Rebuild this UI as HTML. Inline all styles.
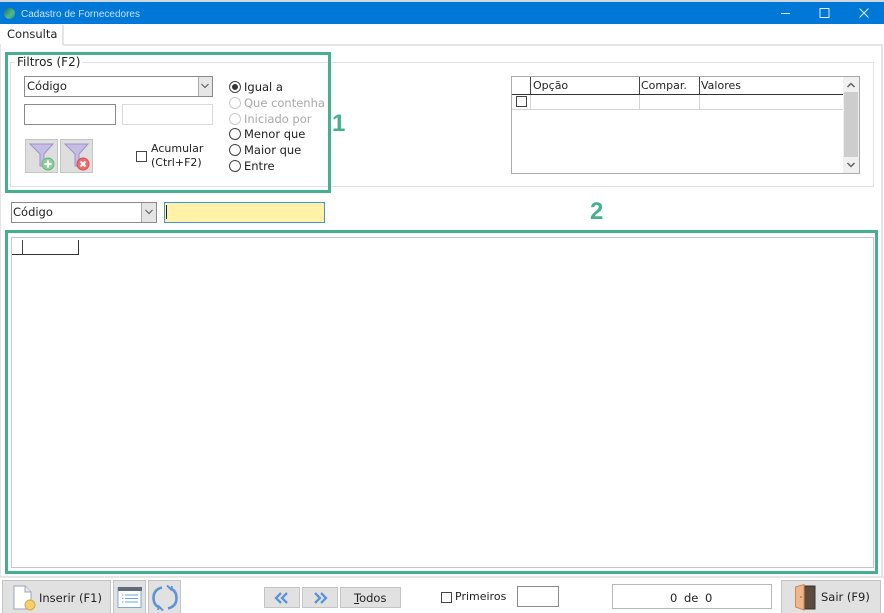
<!DOCTYPE html>
<html><head><meta charset="utf-8">
<style>
html,body{margin:0;padding:0;background:#fff}
#p{position:relative;width:884px;height:613px;overflow:hidden;background:#fff;font-family:"DejaVu Sans","Liberation Sans",sans-serif;font-size:11.5px;color:#222;filter:blur(.3px)}
#p div,#p span.a,#p svg{position:absolute;box-sizing:border-box}
.t{white-space:nowrap;line-height:14px}
.inp{background:#fff;border:1px solid #8a8a8a}
.btn{background:#e1e1e1;border:1px solid #c4c4c4}
.rad{width:12px;height:12px;border:1.3px solid #444;border-radius:50%;background:#fff}
.rd{border-color:#ccc}
.dis{color:#a8a8a8}
.chk{width:11px;height:11px;border:1px solid #444;background:#fff}
.g{border:3px solid #45b08c}
</style></head><body>
<div id="p">
<div style="left:0;top:0;width:884px;height:2px;background:#cfd6dc"></div>
<div style="left:0;top:2px;width:884px;height:22px;background:#0078d7"></div>
<div style="left:4px;top:8px;width:11px;height:11px;border-radius:50%;background:linear-gradient(135deg,#1c6d5a,#52b98f 60%,#2a8a70)"></div>
<div class="t" style="left:21px;top:8px;font-family:'Liberation Sans',sans-serif;font-size:10px;color:#c9e2f6">Cadastro de Fornecedores</div>
<svg style="left:775px;top:2px" width="109" height="22" fill="none" stroke="#dcecf9" stroke-width="1"><path d="M6 11.5H15"/><rect x="45" y="6.5" width="9" height="9"/><path d="M84.5 6.5L93.5 15.5M93.5 6.5L84.5 15.5"/></svg>

<div style="left:63px;top:44px;width:819px;height:2px;background:#e4e4e4"></div>
<div style="left:62px;top:25px;width:2px;height:20px;background:#e4e4e4"></div>
<div style="left:881px;top:44px;width:2px;height:532px;background:#e4e4e4"></div>
<div style="left:0px;top:44px;width:1px;height:532px;background:#e4e4e4"></div>
<div class="t" style="left:7px;top:27px;font-size:11.5px">Consulta</div>

<div style="left:10px;top:62px;width:864px;height:125px;border:1px solid #e2e2e2"></div>
<div class="t" style="left:15px;top:55px;background:#fff;padding:0 2px;font-size:12px">Filtros (F2)</div>

<div class="inp" style="left:24px;top:76px;width:189px;height:21px"></div>
<div style="left:198px;top:77px;width:14px;height:19px;background:#e6e6e6;border-left:1px solid #aaa"></div>
<svg style="left:200px;top:82px" width="10" height="8" fill="none" stroke="#555"><path d="M1.5 2L5 5.5L8.5 2"/></svg>
<div class="t" style="left:27px;top:79px">Código</div>
<div class="inp" style="left:24px;top:104px;width:92px;height:21px"></div>
<div class="inp" style="left:122px;top:104px;width:91px;height:21px;border-color:#d9d9d9"></div>

<div class="btn" style="left:25px;top:139px;width:33px;height:34px;background:#dedede"></div>
<div class="btn" style="left:60px;top:139px;width:33px;height:34px;background:#dedede"></div>
<svg style="left:25px;top:139px" width="70" height="35">
<path d="M5 5H28L19 15V27H15V15Z" fill="#c5bde3" stroke="#9d93c8"/>
<circle cx="23" cy="25" r="6" fill="#8fd09a" stroke="#66b57c"/><path d="M19.500 25H26.500M23 21.500V28.500" stroke="#fff" stroke-width="2"/>
<path d="M40 5H63L54 15V27H50V15Z" fill="#c5bde3" stroke="#9d93c8"/>
<circle cx="58" cy="25" r="6" fill="#ef6a6a" stroke="#dd4f4f"/><path d="M55.500 22.500L60.500 27.500M60.500 22.500L55.500 27.500" stroke="#fff" stroke-width="2"/>
</svg>

<div class="chk" style="left:136px;top:151px"></div>
<div class="t" style="left:151px;top:142px;font-size:11px">Acumular</div>
<div class="t" style="left:151px;top:156px;font-size:11px">(Ctrl+F2)</div>

<div class="rad" style="left:229px;top:81px"></div><div style="left:232px;top:84px;width:6px;height:6px;border-radius:50%;background:#333"></div>
<div class="t" style="left:244px;top:80px">Igual a</div>
<div class="rad rd" style="left:229px;top:97px"></div><div class="t dis" style="left:244px;top:96px">Que contenha</div>
<div class="rad rd" style="left:229px;top:113px"></div><div class="t dis" style="left:244px;top:112px">Iniciado por</div>
<div class="rad" style="left:229px;top:128px"></div><div class="t" style="left:244px;top:127px">Menor que</div>
<div class="rad" style="left:229px;top:144px"></div><div class="t" style="left:244px;top:143px">Maior que</div>
<div class="rad" style="left:229px;top:160px"></div><div class="t" style="left:244px;top:159px">Entre</div>

<div class="g" style="left:5px;top:52px;width:326px;height:141px"></div>
<div class="t" style="left:332px;top:111px;font-family:'Liberation Sans',sans-serif;font-weight:bold;font-size:24px;line-height:26px;color:#45b08c">1</div>

<div style="left:511px;top:76px;width:349px;height:98px;border:1px solid #aaa"></div>
<div style="left:512px;top:94px;width:331px;height:1px;background:#333"></div>
<div style="left:512px;top:109px;width:331px;height:1px;background:#d4d4d4"></div>
<div style="left:530px;top:77px;width:1px;height:17px;background:#444"></div>
<div style="left:639px;top:77px;width:1px;height:17px;background:#444"></div>
<div style="left:699px;top:77px;width:1px;height:17px;background:#444"></div>
<div style="left:530px;top:95px;width:1px;height:14px;background:#d4d4d4"></div>
<div style="left:639px;top:95px;width:1px;height:14px;background:#d4d4d4"></div>
<div style="left:699px;top:95px;width:1px;height:14px;background:#d4d4d4"></div>
<div class="t" style="left:533px;top:79px;font-size:11px">Opção</div>
<div class="t" style="left:641px;top:79px;font-size:11px">Compar.</div>
<div class="t" style="left:701px;top:79px;font-size:11px">Valores</div>
<div class="chk" style="left:516px;top:96px"></div>
<div style="left:843px;top:77px;width:16px;height:96px;background:#f0f0f0"></div>
<div style="left:844px;top:92px;width:14px;height:65px;background:#cdcdcd"></div>
<svg style="left:844px;top:80px" width="14" height="90" fill="none" stroke="#555" stroke-width="1.3"><path d="M3.500 7L7 3.500L10.500 7M3.500 83L7 86.500L10.500 83"/></svg>

<div class="inp" style="left:11px;top:202px;width:146px;height:21px"></div>
<div style="left:141px;top:203px;width:15px;height:19px;background:#e4e4e4;border-left:1px solid #aaa"></div>
<svg style="left:144px;top:208px" width="10" height="8" fill="none" stroke="#555"><path d="M1.500 2L5 5.500L8.500 2"/></svg>
<div class="t" style="left:13px;top:205px">Código</div>
<div style="left:164px;top:202px;width:161px;height:21px;background:#fff2a8;border:1px solid #3f94dc"></div>
<div style="left:166px;top:205px;width:1px;height:14px;background:#222"></div>
<div class="t" style="left:590px;top:199px;font-family:'Liberation Sans',sans-serif;font-weight:bold;font-size:24px;line-height:26px;color:#45b08c">2</div>

<div class="g" style="left:5px;top:230px;width:873px;height:344px"></div>
<div style="left:11px;top:237px;width:863px;height:331px;border:1px solid #c6c6c6"></div>
<div style="left:12px;top:254px;width:67px;height:1px;background:#333"></div>
<div style="left:22px;top:240px;width:1px;height:14px;background:#444"></div>
<div style="left:78px;top:240px;width:1px;height:15px;background:#333"></div>

<div style="left:0;top:576px;width:884px;height:2px;background:#e6e6e6"></div>
<div class="btn" style="left:2px;top:580px;width:109px;height:34px"></div>
<svg style="left:12px;top:584px" width="26" height="28"><path d="M2 2H13L19 8V25H2Z" fill="#fff" stroke="#9aa4b2"/><path d="M13 2V8H19" fill="#e8ecf0" stroke="#9aa4b2"/><circle cx="18" cy="21" r="5" fill="#f5cf6c" stroke="#d6a843"/></svg>
<div class="t" style="left:39px;top:591px">Inserir (F1)</div>
<div class="btn" style="left:113px;top:580px;width:33px;height:34px"></div>
<svg style="left:117px;top:586px" width="26" height="23"><rect x="1" y="1.500" width="23" height="20" fill="#fff" stroke="#7aa7d6"/><rect x="1" y="1" width="24" height="4" fill="#5d6b7c"/><path d="M5 9h1.500M8 9h13M5 12.500h1.500M8 12.500h13M5 16h1.500M8 16h13" stroke="#6fa6dc"/></svg>
<div class="btn" style="left:148px;top:580px;width:33px;height:34px"></div>
<svg style="left:151px;top:584px" width="28" height="28" fill="none" stroke="#5c94d6" stroke-width="2.600"><path d="M11 3.500C5 5 2.500 9 2.500 14C2.500 18 4 21 7 23"/><path d="M17 24.500C23 23 25.500 19 25.500 14C25.500 10 24 7 21 5"/><path d="M16 1.500L20 5.500L21 2M12 26.500L8 22.500L7 26" stroke-width="2"/></svg>

<div class="btn" style="left:264px;top:587px;width:36px;height:21px"></div>
<div class="btn" style="left:302px;top:587px;width:36px;height:21px"></div>
<svg style="left:264px;top:587px" width="74" height="21" fill="none" stroke="#5c94d6" stroke-width="2.300"><path d="M17 6L12 11L17 16M23 6L18 11L23 16M51 6L56 11L51 16M57 6L62 11L57 16"/></svg>
<div class="btn" style="left:340px;top:587px;width:61px;height:21px"></div>
<div class="t" style="left:354px;top:591px"><u>T</u>odos</div>
<div class="chk" style="left:441px;top:592px"></div>
<div class="t" style="left:455px;top:590px;font-size:11px">Primeiros</div>
<div class="inp" style="left:517px;top:586px;width:42px;height:21px"></div>
<div class="inp" style="left:612px;top:584px;width:160px;height:25px;border-color:#b8b8b8"></div>
<div class="t" style="left:670px;top:591px;word-spacing:3px">0 de 0</div>
<div class="btn" style="left:781px;top:580px;width:100px;height:34px"></div>
<svg style="left:794px;top:583px" width="22" height="28"><rect x="9" y="3" width="12" height="23" fill="#5a4a40" stroke="#3a322c"/><path d="M1.500 4L10 1.500V27L1.500 24Z" fill="#f2b58a" stroke="#c98a5c"/><circle cx="7" cy="14" r=".8" fill="#8a5a3a"/></svg>
<div class="t" style="left:821px;top:590px">Sair (F9)</div>
</div>
</body></html>
